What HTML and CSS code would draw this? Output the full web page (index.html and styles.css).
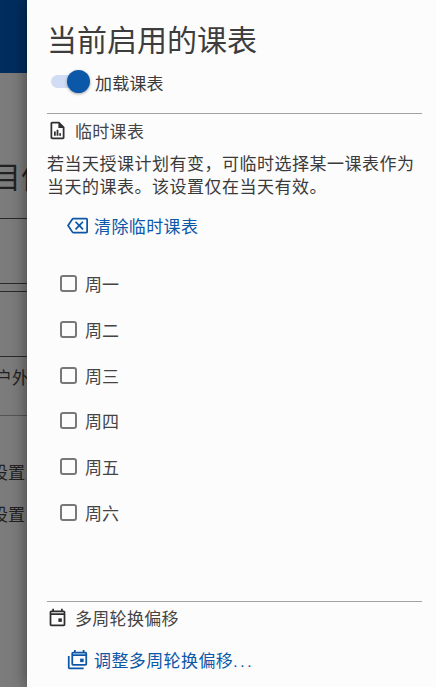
FILE: index.html
```html
<!DOCTYPE html>
<html lang="zh-CN">
<head>
<meta charset="utf-8">
<title>当前启用的课表</title>
<link rel="stylesheet" href="styles.css">
</head>
<body>
<div class="backdrop">
  <div class="appbar"></div>
  <div class="bg-title">目信</div>
  <div class="bg-line l1"></div>
  <div class="bg-line l2"></div>
  <div class="bg-line l3"></div>
  <div class="bg-text outdoor">户外</div>
  <div class="bg-line l4"></div>
  <div class="bg-line l5"></div>
  <div class="bg-text set1">设置</div>
  <div class="bg-text set2">设置</div>
</div>
<aside class="drawer">
  <h1 class="title">当前启用的课表</h1>
  <div class="switch-row">
    <span class="switch"><span class="track"></span><span class="thumb"></span></span>
    <span class="switch-label">加载课表</span>
  </div>
  <hr class="rule rule-top">
  <div class="section-head">
    <svg class="icon" viewBox="0 0 24 24" fill="#2f2f2f"><path d="M14 2H6c-1.1 0-2 .9-2 2v16c0 1.1.9 2 2 2h12c1.1 0 2-.9 2-2V8l-6-6zm4 18H6V4h7v5h5v11z"/><path d="M8 18v-5h2v5zM11 18v-7h2v7zM14 18v-3h2v3z"/></svg>
    <span>临时课表</span>
  </div>
  <p class="desc">若当天授课计划有变，可临时选择某一课表作为当天的课表。该设置仅在当天有效。</p>
  <div class="action action-clear">
    <svg class="icon" viewBox="0 0 24 24" fill="#0b57a8"><path d="M22 3H7c-.69 0-1.23.35-1.59.88L0 12l5.41 8.11c.36.53.9.89 1.59.89h15c1.1 0 2-.9 2-2V5c0-1.1-.9-2-2-2zm0 16H7.07L2.4 12l4.66-7H22v14zM10.41 17 14 13.41 17.59 17 19 15.59 15.41 12 19 8.41 17.59 7 14 10.59 10.41 7 9 8.41 12.59 12 9 15.59z"/></svg>
    <span>清除临时课表</span>
  </div>
  <ul class="days">
    <li class="day"><span class="box"></span>周一</li>
    <li class="day"><span class="box"></span>周二</li>
    <li class="day"><span class="box"></span>周三</li>
    <li class="day"><span class="box"></span>周四</li>
    <li class="day"><span class="box"></span>周五</li>
    <li class="day"><span class="box"></span>周六</li>
  </ul>
  <hr class="rule rule-bottom">
  <div class="section-head head-bottom">
    <svg class="icon" viewBox="0 0 24 24" fill="#2f2f2f"><path d="M19 4h-1V2h-2v2H8V2H6v2H5c-1.1 0-2 .9-2 2v14c0 1.1.9 2 2 2h14c1.1 0 2-.9 2-2V6c0-1.1-.9-2-2-2zm0 16H5V9h14v11zM5 7V6h14v1z"/><path d="M13 13h4v4h-4z"/></svg>
    <span>多周轮换偏移</span>
  </div>
  <div class="action action-shift">
    <svg class="icon" viewBox="0 0 24 24" fill="#0b57a8"><path d="M3 8H1v13c0 1.1.9 2 2 2h16v-2H3z"/><path d="M21 3h-1V1h-2v2H10V1H8v2H7c-1.1 0-2 .9-2 2v12c0 1.1.9 2 2 2h14c1.1 0 2-.9 2-2V5c0-1.1-.9-2-2-2zm0 14H7V8h14zM7 6V5h14v1z"/><path d="M15 11h4v4h-4z"/></svg>
    <span>调整多周轮换偏移<span class="dots">...</span></span>
  </div>
</aside>
</body>
</html>
```

FILE: styles.css
```css
* { box-sizing: border-box; }
html, body {
  margin: 0;
  height: 100%;
  overflow: hidden;
}
body {
  position: relative;
  width: 436px;
  height: 687px;
  font-family: "Roboto", "Noto Sans CJK SC", sans-serif;
  background: #7b7b7b;
}
.backdrop {
  position: absolute;
  inset: 0;
  background: #7c7c7c;
  overflow: hidden;
  color: #222;
}
.appbar {
  height: 73px;
  background: #002d5e;
}
.bg-title {
  position: absolute;
  left: -9px;
  top: 156px;
  font-size: 30px;
  line-height: 44px;
  white-space: nowrap;
}
.bg-line {
  position: absolute;
  left: 0;
  width: 27px;
  height: 1px;
  background: #2a2a2a;
}
.l1 { top: 218px; }
.l2 { top: 283px; }
.l3 { top: 291px; }
.l4 { top: 356px; }
.l5 { top: 415px; background: #555; }
.bg-text {
  position: absolute;
  left: -5px;
  font-size: 17px;
  line-height: 24px;
  white-space: nowrap;
}
.outdoor { top: 366px; }
.set1 { top: 461px; left: -9px; }
.set2 { top: 503px; left: -9px; }
.drawer {
  position: absolute;
  left: 27px;
  top: 0;
  width: 409px;
  height: 687px;
  background: #fcfcfd;
  padding: 0 14px 0 20px;
  box-shadow: 0 0 16px rgba(0, 0, 0, .5);
  color: #3a3a3a;
}
.title {
  margin: 0;
  padding-top: 19px;
  font-size: 30px;
  font-weight: 400;
  line-height: 43px;
  color: #3d3d3d;
}
.switch-row {
  display: flex;
  align-items: center;
  gap: 4px;
  height: 24px;
  margin-top: 8px;
  font-size: 17px;
  letter-spacing: .2px;
}
.switch {
  position: relative;
  display: block;
  width: 44px;
  height: 24px;
  flex: none;
}
.track {
  position: absolute;
  left: 4px;
  top: 5px;
  width: 38px;
  height: 13px;
  border-radius: 7px;
  background: #cfdcf3;
}
.thumb {
  position: absolute;
  left: 20px;
  top: 0;
  width: 23px;
  height: 23px;
  border-radius: 50%;
  background: #0b57a8;
  box-shadow: 0 1px 3px rgba(0, 0, 0, .35);
}
.rule {
  margin: 0;
  border: 0;
  height: 1px;
  background: #a3a3a3;
}
.rule-top { margin-top: 19px; }
.section-head {
  display: flex;
  align-items: center;
  gap: 7px;
  height: 24px;
  margin-top: 4px;
  font-size: 17px;
  letter-spacing: .3px;
  color: #444;
}
.icon {
  display: block;
  width: 21px;
  height: 21px;
  flex: none;
}
.desc {
  margin: 11px 0 0;
  font-size: 17px;
  letter-spacing: .5px;
  line-height: 23px;
  color: #3a3a3a;
}
.action {
  display: flex;
  align-items: center;
  gap: 6px;
  padding-left: 20px;
  font-size: 17px;
  letter-spacing: .4px;
  color: #0b57a8;
  height: 24px;
}
.action-clear { margin-top: 14px; }
.days {
  list-style: none;
  margin: 24px 0 0;
  padding: 0 0 0 13px;
}
.day {
  display: flex;
  align-items: center;
  gap: 8px;
  height: 45.7px;
  font-size: 17px;
  color: #444;
}
.box {
  display: block;
  width: 17px;
  height: 17px;
  border: 2px solid #787878;
  border-radius: 3px;
  flex: none;
}
.rule-bottom { margin-top: 65.6px; }
.head-bottom { margin-top: 4px; }
.action-shift { margin-top: 18px; }
.dots { letter-spacing: 2.6px; }
```
